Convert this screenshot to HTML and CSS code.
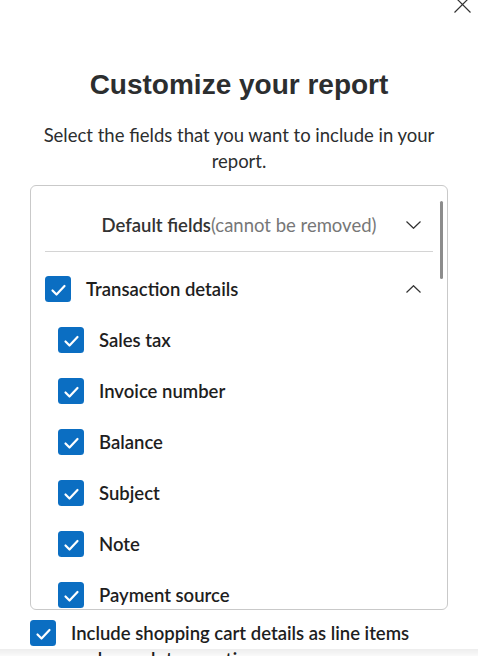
FILE: index.html
```html
<!DOCTYPE html>
<html lang="en">
<head>
<meta charset="utf-8">
<title>Customize your report</title>
<link rel="stylesheet" href="styles.css">
</head>
<body>
<div class="close-row">
  <svg class="close" width="17" height="17" viewBox="0 0 17 17" aria-label="Close"><path d="M0.5 0.5 L16.5 16.5 M16.5 0.5 L0.5 16.5" stroke="#333" stroke-width="1.2" fill="none"/></svg>
</div>
<h1 class="title">Customize your report</h1>
<p class="subtitle">Select the fields that you want to include in your report.</p>

<div class="fields-box">
  <div class="scroll-thumb"></div>
  <div class="default-row">
    <span class="default-label"><span class="strong">Default fields</span><span class="muted">(cannot be removed)</span></span>
    <svg class="chevron" width="15" height="8" viewBox="0 0 15 8"><path d="M0.5 0.5 L7.5 7.3 L14.5 0.5" stroke="#333" stroke-width="1.2" fill="none"/></svg>
  </div>

  <div class="check-row group-row">
    <svg class="cb" width="26" height="26" viewBox="0 0 26 26"><rect width="26" height="26" rx="3.5" fill="#0b6ec2"/><path d="M7.5 14.5 L11.5 18.5 L19.5 10" stroke="#fff" stroke-width="2.2" fill="none" stroke-linecap="round" stroke-linejoin="round"/></svg>
    <span class="label">Transaction details</span>
    <svg class="chevron up" width="15" height="8" viewBox="0 0 15 8"><path d="M0.5 7.5 L7.5 0.7 L14.5 7.5" stroke="#333" stroke-width="1.2" fill="none"/></svg>
  </div>

  <div class="check-row item-row">
    <svg class="cb" width="26" height="26" viewBox="0 0 26 26"><rect width="26" height="26" rx="3.5" fill="#0b6ec2"/><path d="M7.5 14.5 L11.5 18.5 L19.5 10" stroke="#fff" stroke-width="2.2" fill="none" stroke-linecap="round" stroke-linejoin="round"/></svg>
    <span class="label">Sales tax</span>
  </div>
  <div class="check-row item-row">
    <svg class="cb" width="26" height="26" viewBox="0 0 26 26"><rect width="26" height="26" rx="3.5" fill="#0b6ec2"/><path d="M7.5 14.5 L11.5 18.5 L19.5 10" stroke="#fff" stroke-width="2.2" fill="none" stroke-linecap="round" stroke-linejoin="round"/></svg>
    <span class="label">Invoice number</span>
  </div>
  <div class="check-row item-row">
    <svg class="cb" width="26" height="26" viewBox="0 0 26 26"><rect width="26" height="26" rx="3.5" fill="#0b6ec2"/><path d="M7.5 14.5 L11.5 18.5 L19.5 10" stroke="#fff" stroke-width="2.2" fill="none" stroke-linecap="round" stroke-linejoin="round"/></svg>
    <span class="label">Balance</span>
  </div>
  <div class="check-row item-row">
    <svg class="cb" width="26" height="26" viewBox="0 0 26 26"><rect width="26" height="26" rx="3.5" fill="#0b6ec2"/><path d="M7.5 14.5 L11.5 18.5 L19.5 10" stroke="#fff" stroke-width="2.2" fill="none" stroke-linecap="round" stroke-linejoin="round"/></svg>
    <span class="label">Subject</span>
  </div>
  <div class="check-row item-row">
    <svg class="cb" width="26" height="26" viewBox="0 0 26 26"><rect width="26" height="26" rx="3.5" fill="#0b6ec2"/><path d="M7.5 14.5 L11.5 18.5 L19.5 10" stroke="#fff" stroke-width="2.2" fill="none" stroke-linecap="round" stroke-linejoin="round"/></svg>
    <span class="label">Note</span>
  </div>
  <div class="check-row item-row">
    <svg class="cb" width="26" height="26" viewBox="0 0 26 26"><rect width="26" height="26" rx="3.5" fill="#0b6ec2"/><path d="M7.5 14.5 L11.5 18.5 L19.5 10" stroke="#fff" stroke-width="2.2" fill="none" stroke-linecap="round" stroke-linejoin="round"/></svg>
    <span class="label">Payment source</span>
  </div>
</div>

<div class="cart-row">
  <svg class="cb" width="26" height="26" viewBox="0 0 26 26"><rect width="26" height="26" rx="3.5" fill="#0b6ec2"/><path d="M7.5 14.5 L11.5 18.5 L19.5 10" stroke="#fff" stroke-width="2.2" fill="none" stroke-linecap="round" stroke-linejoin="round"/></svg>
  <span class="cart-label">Include shopping cart details as line items under each transaction</span>
</div>

<div class="footer-shade"></div>
</body>
</html>
```

FILE: styles.css
```css
* { box-sizing: border-box; }

html, body {
  margin: 0;
  padding: 0;
  background: #fff;
  overflow: hidden;
}

body {
  font-family: Lato, "Noto Sans", sans-serif;
  color: #2c2e2f;
}

.close-row {
  display: flex;
  justify-content: flex-end;
  height: 13px;
  padding-right: 7px;
}

.close {
  margin-top: -4px;
  display: block;
}

.title {
  margin: 55px 0 0;
  font-family: "Liberation Sans", Arial, sans-serif;
  font-size: 28px;
  line-height: 34px;
  font-weight: 700;
  text-align: center;
  color: #2c2e2f;
}

.subtitle {
  margin: 20px 0 0;
  padding: 0 30px;
  font-size: 18.5px;
  line-height: 26px;
  text-align: center;
  color: #2c2e2f;
}

.fields-box {
  position: relative;
  margin: 11px 30px 0;
  height: 425px;
  border: 1px solid #c9c9c9;
  border-radius: 6px;
  padding: 0 14px;
  overflow: hidden;
}

.scroll-thumb {
  position: absolute;
  top: 15px;
  right: 4px;
  width: 3px;
  height: 78px;
  border-radius: 2px;
  background: #8c8c8c;
}

.default-row {
  display: flex;
  align-items: center;
  padding: 27px 12px 14px 27px;
  border-bottom: 1px solid #d4d4d4;
  font-size: 18.5px;
  line-height: 24px;
}

.default-label {
  flex: 1;
  text-align: center;
}

.strong {
  font-weight: 600;
  color: #333;
}

.muted {
  color: #777;
}

.chevron {
  display: block;
  flex: none;
}

.check-row {
  display: flex;
  align-items: center;
  height: 26px;
  margin-bottom: 25px;
  font-size: 18.5px;
  font-weight: 600;
  color: #1e1e1e;
}

.group-row {
  margin-top: 24px;
  padding-right: 12px;
}

.group-row .chevron {
  margin-left: auto;
}

.item-row {
  padding-left: 13px;
}

.cb {
  display: block;
  flex: none;
}

.label {
  margin-left: 15px;
}

.cart-row {
  display: flex;
  align-items: flex-start;
  margin: 10px 30px 0;
}

.cart-label {
  margin-left: 15px;
  font-size: 18.5px;
  line-height: 26px;
  font-weight: 600;
  color: #1e1e1e;
}

.footer-shade {
  position: fixed;
  left: 0;
  right: 0;
  bottom: 0;
  height: 7px;
  background: linear-gradient(rgba(0, 0, 0, 0.07), rgba(0, 0, 0, 0.02));
}
```
